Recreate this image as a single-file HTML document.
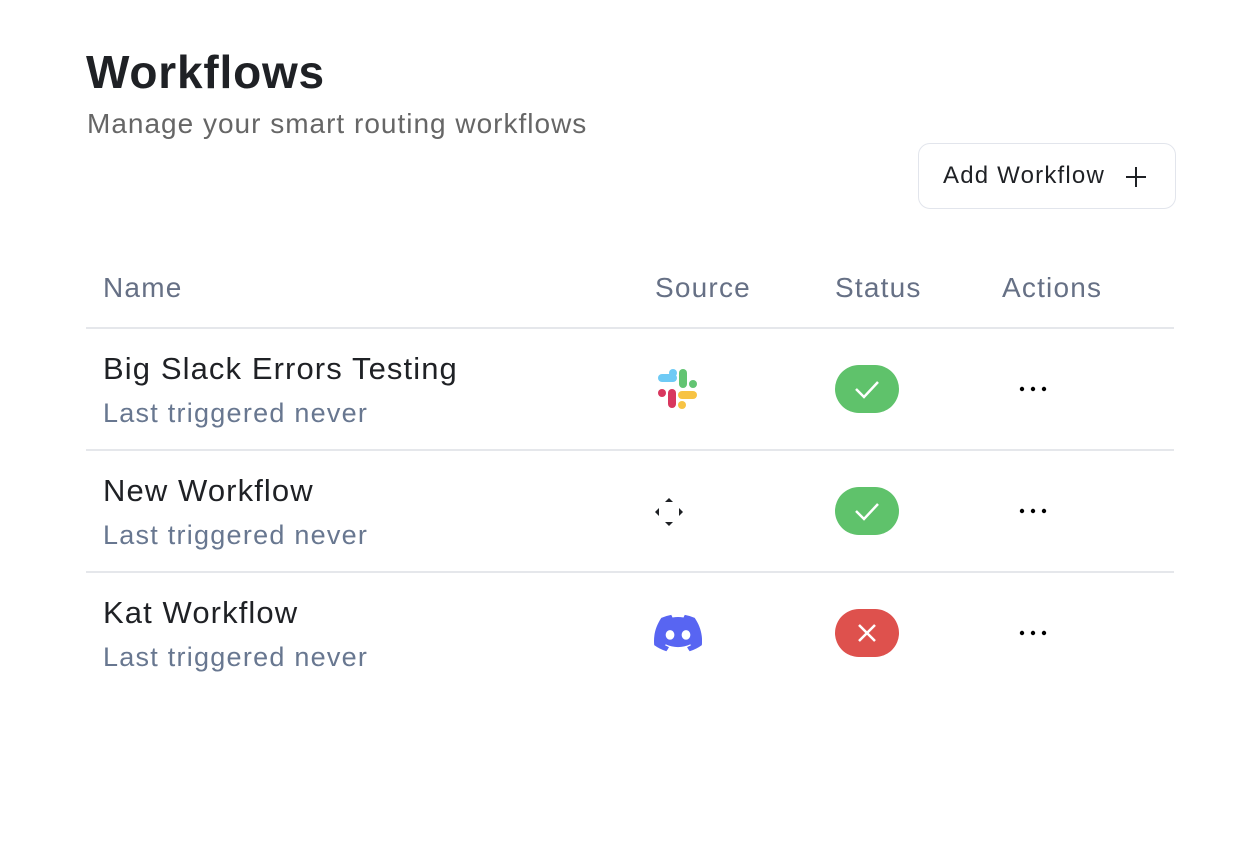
<!DOCTYPE html>
<html><head><meta charset="utf-8"><style>
body{margin:0;width:1240px;height:868px;background:#fff;font-family:"Liberation Sans",sans-serif;position:relative;overflow:hidden}
.a{position:absolute;white-space:nowrap}
h1{position:absolute;left:86px;top:44px;margin:0;font-size:46px;font-weight:bold;color:#1f2125;line-height:56px;letter-spacing:0.8px}
.sub{left:87px;top:108px;font-size:28px;color:#666;line-height:32px;letter-spacing:1px}
.btn{position:absolute;left:918px;top:143px;width:258px;height:66px;border:1.5px solid #e2e5ec;border-radius:12px;box-sizing:border-box}
.btn span{position:absolute;left:24px;top:19px;font-size:24px;color:#1f2125;letter-spacing:1.2px;line-height:26px}
.th{top:272px;font-size:28px;color:#667085;line-height:32px;letter-spacing:1.2px}
.line{position:absolute;left:86px;width:1088px;height:2px;background:#e5e7eb}
.nm{font-size:31px;color:#1f2125;left:103px;line-height:34px;letter-spacing:1.1px}
.lt{font-size:27px;color:#687790;left:103px;line-height:30px;letter-spacing:1.25px}
.pill{position:absolute;left:835px;width:64px;height:48px;border-radius:24px}
.dots{position:absolute;left:1019px;width:28px;height:6px}
</style></head><body>
<h1>Workflows</h1>
<div class="a sub">Manage your smart routing workflows</div>
<div class="btn"><span>Add Workflow</span>
<svg style="position:absolute;left:206px;top:22px" width="22" height="22" viewBox="0 0 22 22"><path d="M11 1v20M1 11h20" stroke="#1f2125" stroke-width="2"/></svg></div>
<div class="a th" style="left:103px">Name</div>
<div class="a th" style="left:655px">Source</div>
<div class="a th" style="left:835px">Status</div>
<div class="a th" style="left:1002px">Actions</div>
<div class="line" style="top:327px"></div>
<div class="line" style="top:449px"></div>
<div class="line" style="top:571px"></div>

<div class="a nm" style="top:352px">Big Slack Errors Testing</div>
<div class="a lt" style="top:398px">Last triggered never</div>
<div class="a nm" style="top:474px">New Workflow</div>
<div class="a lt" style="top:520px">Last triggered never</div>
<div class="a nm" style="top:596px">Kat Workflow</div>
<div class="a lt" style="top:642px">Last triggered never</div>

<svg class="a" style="left:658px;top:369px" width="40" height="40" viewBox="0 0 40 40">
<rect x="0" y="5" width="19" height="8" rx="4" fill="#6ecaf5"/><rect x="11" y="0" width="8" height="8" rx="4" fill="#6ecaf5"/>
<rect x="21" y="0" width="8" height="19" rx="4" fill="#62c472"/><rect x="31" y="11" width="8" height="8" rx="4" fill="#62c472"/>
<rect x="20" y="22" width="19" height="8" rx="4" fill="#f7c344"/><rect x="20" y="32" width="8" height="8" rx="4" fill="#f7c344"/>
<rect x="10" y="20" width="8" height="19" rx="4" fill="#d8375e"/><rect x="0" y="20" width="8" height="8" rx="4" fill="#d8375e"/>
</svg>

<svg class="a" style="left:655px;top:498px" width="28" height="28" viewBox="0 0 28 28" fill="#1f2125">
<path d="M14 0l4 4h-8z"/><path d="M14 28l4-4h-8z"/><path d="M0 14l4-4v8z"/><path d="M28 14l-4-4v8z"/></svg>

<svg class="a" style="left:654px;top:614px" width="48" height="38" viewBox="0 0 127 96"><path fill="#5865f2" d="M107.7 8.07A105 105 0 0 0 81.47 0a72 72 0 0 0-3.36 6.830 97.7 97.7 0 0 0-29.11 0A72 72 0 0 0 45.64 0a105.9 105.9 0 0 0-26.25 8.09C2.79 32.65-1.710 56.6.54 80.21a105.7 105.7 0 0 0 32.17 16.15 77.7 77.7 0 0 0 6.890-11.11 68.4 68.4 0 0 1-10.850-5.180c.91-.66 1.8-1.34 2.66-2a75.6 75.6 0 0 0 64.32 0c.87.71 1.76 1.39 2.66 2a68.7 68.7 0 0 1-10.870 5.19 77 77 0 0 0 6.890 11.1 105.3 105.3 0 0 0 32.19-16.14c2.64-27.38-4.51-51.11-18.9-72.15zM42.45 65.69C36.18 65.690 31 60 31 53s5-12.74 11.44-12.74S54 46 53.89 53s-5.05 12.69-11.44 12.69zm42.24 0C78.41 65.69 73.25 60 73.25 53s5-12.74 11.44-12.74S96.23 46 96.12 53s-5.04 12.69-11.43 12.69z"/></svg>

<div class="pill" style="top:365px;background:#5fc26b"><svg width="64" height="48"><path d="M21 24l8 8 14-15" fill="none" stroke="#fff" stroke-width="2.5"/></svg></div>
<div class="pill" style="top:487px;background:#5fc26b"><svg width="64" height="48"><path d="M21 24l8 8 14-15" fill="none" stroke="#fff" stroke-width="2.5"/></svg></div>
<div class="pill" style="top:609px;background:#de514d"><svg width="64" height="48"><path d="M24 16l16 16M40 16l-16 16" fill="none" stroke="#fff" stroke-width="2.5"/></svg></div>

<svg class="dots" style="top:386px" viewBox="0 0 28 6"><circle cx="3" cy="3" r="2.2"/><circle cx="14" cy="3" r="2.2"/><circle cx="25" cy="3" r="2.2"/></svg>
<svg class="dots" style="top:508px" viewBox="0 0 28 6"><circle cx="3" cy="3" r="2.2"/><circle cx="14" cy="3" r="2.2"/><circle cx="25" cy="3" r="2.2"/></svg>
<svg class="dots" style="top:630px" viewBox="0 0 28 6"><circle cx="3" cy="3" r="2.2"/><circle cx="14" cy="3" r="2.2"/><circle cx="25" cy="3" r="2.2"/></svg>
</body></html>
